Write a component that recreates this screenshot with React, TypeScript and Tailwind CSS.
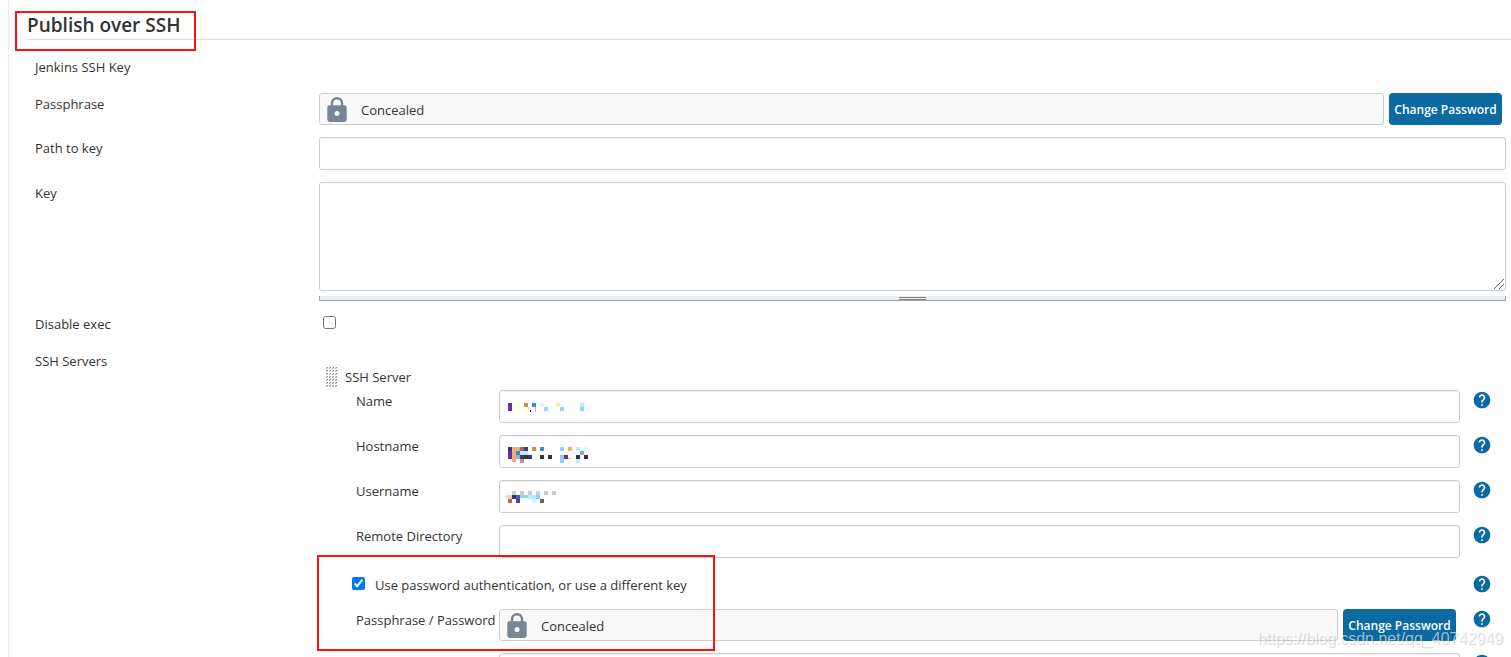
import type { ReactNode } from "react";
import { MdHelp } from "react-icons/md";

type Cell = [x: number, y: number, w: number, h: number, fill: string];

const NAME_CELLS: Cell[] = [
  [0, 3, 4, 8, "#663399"], [8, 3, 4, 8, "#ffffcc"], [16, 3, 4, 4, "#cc8f33"], [20, 7, 1, 3, "#f3c9a0"],
  [24, 3, 4, 4, "#3390d0"], [22, 10, 1, 2, "#000080"], [27, 7, 1, 5, "#f0a870"], [32, 3, 4, 4, "#dff8ff"],
  [36, 7, 4, 4, "#90d0ff"], [48, 3, 4, 4, "#ffe4b0"], [52, 7, 4, 4, "#90d0ff"], [72, 3, 4, 4, "#b8ecff"],
  [72, 7, 4, 4, "#90d0ff"], [80, 7, 1, 4, "#f8d8c0"],
];

const HOST_CELLS: Cell[] = [
  [0, 2, 4, 4, "#333399"], [4, 2, 8, 4, "#f0b070"], [12, 2, 4, 4, "#906090"], [16, 2, 4, 4, "#663366"],
  [24, 2, 4, 4, "#cc9033"], [32, 2, 4, 4, "#3390d0"], [0, 6, 4, 8, "#663399"], [4, 6, 4, 4, "#f0b070"],
  [8, 6, 4, 4, "#3390b0"], [12, 6, 8, 4, "#b8ecff"], [4, 10, 4, 4, "#f0b070"], [8, 10, 4, 4, "#90b0d8"],
  [12, 10, 4, 4, "#663333"], [16, 10, 4, 4, "#303038"], [20, 10, 4, 4, "#333399"], [32, 10, 4, 4, "#333333"],
  [40, 10, 4, 4, "#333333"], [4, 14, 4, 3, "#f0b070"], [12, 14, 4, 4, "#b890b8"], [52, 2, 4, 4, "#90d0ff"],
  [60, 2, 4, 4, "#f0b070"], [68, 2, 4, 4, "#b8ecff"], [72, 6, 4, 4, "#66b0f0"], [52, 10, 4, 8, "#90d0ff"],
  [56, 10, 4, 4, "#663366"], [60, 13, 3, 1, "#f0b070"], [68, 10, 4, 4, "#333333"], [68, 14, 4, 4, "#b8ecff"],
  [76, 2, 4, 4, "#e8faff"], [76, 10, 4, 4, "#333333"],
];

const USER_CELLS: Cell[] = [
  [4, 1, 4, 4, "#cccccc"], [12, 1, 4, 4, "#cccccc"], [20, 1, 4, 4, "#cccccc"], [28, 1, 4, 4, "#cccccc"],
  [36, 1, 4, 4, "#cccccc"], [44, 1, 4, 4, "#cccccc"], [-3, 5, 3, 3, "#ffe0a8"], [0, 5, 4, 4, "#f8c8c8"],
  [4, 5, 4, 4, "#333399"], [8, 5, 4, 4, "#3366b0"], [12, 5, 8, 3, "#90d0ff"], [20, 5, 8, 4, "#b8ecff"],
  [28, 5, 4, 4, "#90d0ff"], [0, 9, 4, 4, "#b07038"], [8, 9, 4, 4, "#663399"], [24, 9, 4, 4, "#d0f8ff"],
  [32, 9, 4, 4, "#666666"],
];

const servers = [
  { id: "name", label: "Name", cells: NAME_CELLS },
  { id: "hostname", label: "Hostname", cells: HOST_CELLS },
  { id: "username", label: "Username", cells: USER_CELLS },
  { id: "remote", label: "Remote Directory", cells: [] as Cell[] },
];

const inputClass =
  "block h-[33px] w-full rounded-[3px] border border-[#ccc] bg-white px-2 shadow-[inset_0_1px_1px_rgba(0,0,0,0.06)]";

function Mosaic({ cells }: { cells: Cell[] }) {
  return (
    <svg
      className="pointer-events-none absolute left-1 top-2.5"
      width="96"
      height="20"
      viewBox="-5 0 96 20"
      shapeRendering="crispEdges"
      aria-hidden="true"
    >
      {cells.map(([x, y, w, h, fill], i) => (
        <rect key={i} x={x} y={y} width={w} height={h} fill={fill} />
      ))}
    </svg>
  );
}

function LockIcon() {
  return (
    <svg width="20" height="25" viewBox="0 0 20 25" fill="none" aria-hidden="true">
      <path d="M5 9V6.2a5 5 0 0 1 10 0V9" stroke="#788594" strokeWidth="2.4" />
      <rect x="0.3" y="8.2" width="19.4" height="16.8" rx="2.4" fill="#788594" />
      <circle cx="10" cy="16.6" r="2.5" fill="#f9f9f9" />
    </svg>
  );
}

function Concealed() {
  return (
    <div className="flex gap-[5px]">
      <div className="flex h-8 flex-1 items-center gap-3.5 rounded-[3px] border border-[#ccc] bg-[#f9f9f9] px-[7px]">
        <LockIcon />
        <span className="pt-0.5">Concealed</span>
      </div>
      <button
        type="button"
        className="h-8 w-[113px] whitespace-nowrap rounded-[4px] bg-[#0b6aa2] pt-0.5 text-[12px] font-semibold text-white"
      >
        Change Password
      </button>
    </div>
  );
}

function Row({ label, htmlFor, children }: { label: string; htmlFor?: string; children?: ReactNode }) {
  return (
    <div className="flex items-start">
      <label htmlFor={htmlFor} className="w-[284px] shrink-0 pt-px">
        {label}
      </label>
      <div className="min-w-0 flex-1">{children}</div>
    </div>
  );
}

function HelpButton({ label }: { label: string }) {
  return (
    <button type="button" aria-label={`Help for ${label}`} className="ml-3 shrink-0 text-[#0b6aa2]">
      <MdHelp size={20} />
    </button>
  );
}

function ServerRow({ label, htmlFor, children }: { label: string; htmlFor?: string; children: ReactNode }) {
  return (
    <div className="flex items-start">
      <label htmlFor={htmlFor} className="w-[143px] shrink-0 whitespace-nowrap pt-px">
        {label}
      </label>
      <div className="relative min-w-0 flex-1">{children}</div>
      <HelpButton label={label} />
    </div>
  );
}

export default function App() {
  return (
    <main className="relative h-screen overflow-hidden bg-white pl-2 font-['Open_Sans','Noto_Sans',sans-serif] text-[13px] leading-5 text-[#333]">
      <section className="min-h-full border-l border-[#e9eef0] pl-[18px]">
        <h2 className="h-10 border-b border-[#dcdfdf] pt-2.5 text-[19px] font-semibold leading-[30px]">
          Publish over SSH
        </h2>

        <div className="flex flex-col gap-3 pl-2 pr-[5px] pt-[17px]">
          <div className="pb-1">Jenkins SSH Key</div>
          <Row label="Passphrase">
            <div className="pr-1">
              <Concealed />
            </div>
          </Row>
          <Row label="Path to key" htmlFor="path">
            <input id="path" className={inputClass} />
          </Row>
          <Row label="Key" htmlFor="key">
            <div className="relative">
              <textarea
                id="key"
                className="block h-[109px] w-full resize-none rounded-[3px] border border-[#ccc] bg-white px-2"
              />
              <svg
                className="pointer-events-none absolute bottom-0.5 right-0.5"
                width="10"
                height="10"
                viewBox="0 0 10 10"
                stroke="#666"
                aria-hidden="true"
              >
                <path d="M0 10 10 0M5 10l5-5" />
              </svg>
            </div>
            <div className="mt-[5px] flex h-[5px] flex-col items-center justify-between border border-t-0 border-[#98a5b0] bg-[#e8eef0]">
              <span className="mt-px h-px w-[27px] bg-[#808080]" />
              <span className="h-px w-[27px] bg-[#808080]" />
            </div>
          </Row>
          <Row label="Disable exec" htmlFor="disable-exec">
            <input id="disable-exec" type="checkbox" className="ml-1 mt-[3px] block size-[13px]" />
          </Row>
          <div className="pt-1">
            <Row label="SSH Servers">
              <div className="pl-[7px] pt-[17px]">
                <div className="flex items-center gap-2">
                  <svg width="11" height="20" viewBox="0 0 11 20" shapeRendering="crispEdges" aria-hidden="true">
                    <defs>
                      <pattern id="grip" width="3" height="3" patternUnits="userSpaceOnUse">
                        <rect width="2" height="2" fill="#d4d4d4" />
                        <rect x="1" width="1" height="1" fill="#8c8c8c" />
                        <rect y="1" width="1" height="1" fill="#b0b0b0" />
                      </pattern>
                    </defs>
                    <rect width="11" height="20" fill="url(#grip)" />
                  </svg>
                  <span>SSH Server</span>
                </div>
                <div className="mt-[3px] flex flex-col gap-3 pl-[30px] pr-3.5">
                  {servers.map((field) => (
                    <ServerRow key={field.id} label={field.label} htmlFor={field.id}>
                      <input id={field.id} className={inputClass} />
                      <Mosaic cells={field.cells} />
                    </ServerRow>
                  ))}
                  <div className="flex items-start justify-between pb-0.5 pt-1">
                    <label className="flex gap-2.5 pt-px">
                      <input type="checkbox" defaultChecked className="-ml-1 mt-0.5 size-[13px]" />
                      Use password authentication, or use a different key
                    </label>
                    <HelpButton label="password authentication" />
                  </div>
                  <ServerRow label="Passphrase / Password">
                    <div className="pr-1">
                      <Concealed />
                    </div>
                  </ServerRow>
                  <div className="flex items-start pl-[143px]">
                    <input aria-label="Path to key" className={inputClass} />
                    <HelpButton label="Path to key" />
                  </div>
                </div>
              </div>
            </Row>
          </div>
        </div>
      </section>

      <div className="pointer-events-none absolute left-[15px] top-[11px] h-10 w-[181px] border-2 border-[#ff1010]" />
      <div className="pointer-events-none absolute left-[317px] top-[555px] h-24 w-[398px] border-2 border-[#ff1010]" />
      <div className="pointer-events-none absolute bottom-2 right-2 font-['Liberation_Sans',sans-serif] text-[16px] leading-5 text-white/60 [text-shadow:1px_1px_1px_rgba(0,0,0,0.18)]">
        https://blog.csdn.net/qq_40742949
      </div>
    </main>
  );
}
